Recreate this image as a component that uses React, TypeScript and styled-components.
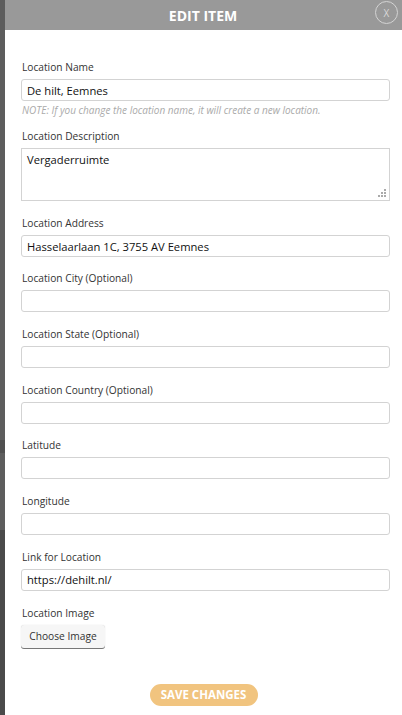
import React from "react";
import styled, { createGlobalStyle } from "styled-components";

const Global = createGlobalStyle`
  html, body {
    margin: 0;
    padding: 0;
    background: #5b5b5b;
    font-family: "Open Sans", "Liberation Sans", sans-serif;
  }
  * { box-sizing: border-box; }
`;

const Page = styled.div`
  display: flex;
  min-height: 715px;
`;

const Backdrop = styled.div`
  width: 5px;
  flex-shrink: 0;
  background: linear-gradient(
    #5d5d5d 0, #5d5d5d 440px, #505050 440px, #505050 453px,
    #5d5d5d 453px, #5d5d5d 530px, #4a4a4a 530px
  );
`;

const Modal = styled.div`
  flex: 1;
  background: #fff;
  display: flex;
  flex-direction: column;
`;

const Header = styled.div`
  position: relative;
  height: 30px;
  background: #999999;
  display: flex;
  align-items: center;
  justify-content: center;
`;

const Title = styled.h2`
  margin: 0;
  color: #fff;
  font-size: 14px;
  font-weight: 700;
  padding-right: 1px;
`;

const Close = styled.button`
  position: absolute;
  right: 4px;
  top: 1px;
  width: 23px;
  height: 23px;
  border-radius: 50%;
  border: 1px solid #d4d4d4;
  background: transparent;
  color: #d8d8d8;
  font-family: "Open Sans", sans-serif;
  font-size: 10px;
  line-height: 1;
  padding: 0;
  display: flex;
  align-items: center;
  justify-content: center;
`;

const Body = styled.div`
  padding: 30px 12px 0 16px;
  display: flex;
  flex-direction: column;
`;

const Group = styled.div<{ $mb?: number }>`
  display: flex;
  flex-direction: column;
  margin-bottom: ${(p) => p.$mb ?? 14.8}px;
`;

const Label = styled.label`
  font-size: 10.2px;
  line-height: 15px;
  color: #333;
  padding-left: 1px;
  margin-bottom: 4px;
`;

const Input = styled.input`
  height: 22px;
  width: 100%;
  border: 1px solid #d3d3d3;
  border-radius: 3px;
  padding: 0 5px;
  font-family: inherit;
  font-size: 11.2px;
  color: #111;
  outline: none;
`;

const AreaWrap = styled.div`
  position: relative;
  height: 53px;

  &::after {
    content: "";
    position: absolute;
    right: 4px;
    bottom: 4px;
    width: 8px;
    height: 8px;
    background:
      linear-gradient(#aaa, #aaa) 6px 0 / 2px 2px no-repeat,
      linear-gradient(#aaa, #aaa) 3px 3px / 2px 2px no-repeat,
      linear-gradient(#aaa, #aaa) 6px 3px / 2px 2px no-repeat,
      linear-gradient(#aaa, #aaa) 0 6px / 2px 2px no-repeat,
      linear-gradient(#aaa, #aaa) 3px 6px / 2px 2px no-repeat,
      linear-gradient(#aaa, #aaa) 6px 6px / 2px 2px no-repeat;
  }
`;

const TextArea = styled.textarea`
  display: block;
  height: 100%;
  width: 100%;
  border: 1px solid #d3d3d3;
  border-radius: 0;
  padding: 3px 5px;
  font-family: inherit;
  font-size: 11.2px;
  color: #111;
  resize: none;
  outline: none;
`;

const Note = styled.div`
  font-size: 10px;
  font-style: italic;
  color: #aaa;
  margin-top: 2px;
  padding-left: 1px;
`;

const ChooseButton = styled.button`
  align-self: flex-start;
  height: 23px;
  width: 84px;
  padding: 0;
  border: none;
  border-radius: 3px;
  background: #f6f6f6;
  box-shadow: 0 1px 0 #777, 0 0 1px #ccc;
  font-family: inherit;
  font-size: 10.2px;
  color: #333;
`;

const Footer = styled.div`
  display: flex;
  justify-content: center;
  padding: 36px 0 9px;
`;

const SaveButton = styled.button`
  width: 108px;
  height: 22px;
  border: none;
  border-radius: 11px;
  background: #f1c47f;
  color: #fff;
  font-family: inherit;
  font-size: 11.5px;
  font-weight: 700;
`;

type Field = { label: string; value?: string };

const fields: Field[] = [
  { label: "Location City (Optional)" },
  { label: "Location State (Optional)" },
  { label: "Location Country (Optional)" },
  { label: "Latitude" },
  { label: "Longitude" },
  { label: "Link for Location", value: "https://dehilt.nl/" },
];

export default function App() {
  return (
    <Page>
      <Global />
      <Backdrop />
      <Modal>
        <Header>
          <Title>EDIT ITEM</Title>
          <Close>X</Close>
        </Header>
        <Body>
          <Group $mb={12}>
            <Label>Location Name</Label>
            <Input defaultValue="De hilt, Eemnes" />
            <Note>NOTE: If you change the location name, it will create a new location.</Note>
          </Group>
          <Group $mb={15}>
            <Label>Location Description</Label>
            <AreaWrap>
              <TextArea defaultValue="Vergaderruimte" />
            </AreaWrap>
          </Group>
          <Group $mb={14}>
            <Label>Location Address</Label>
            <Input defaultValue="Hasselaarlaan 1C, 3755 AV Eemnes" />
          </Group>
          {fields.map((f) => (
            <Group key={f.label}>
              <Label>{f.label}</Label>
              <Input defaultValue={f.value ?? ""} />
            </Group>
          ))}
          <Group $mb={0}>
            <Label>Location Image</Label>
            <ChooseButton>Choose Image</ChooseButton>
          </Group>
        </Body>
        <Footer>
          <SaveButton>SAVE CHANGES</SaveButton>
        </Footer>
      </Modal>
    </Page>
  );
}
